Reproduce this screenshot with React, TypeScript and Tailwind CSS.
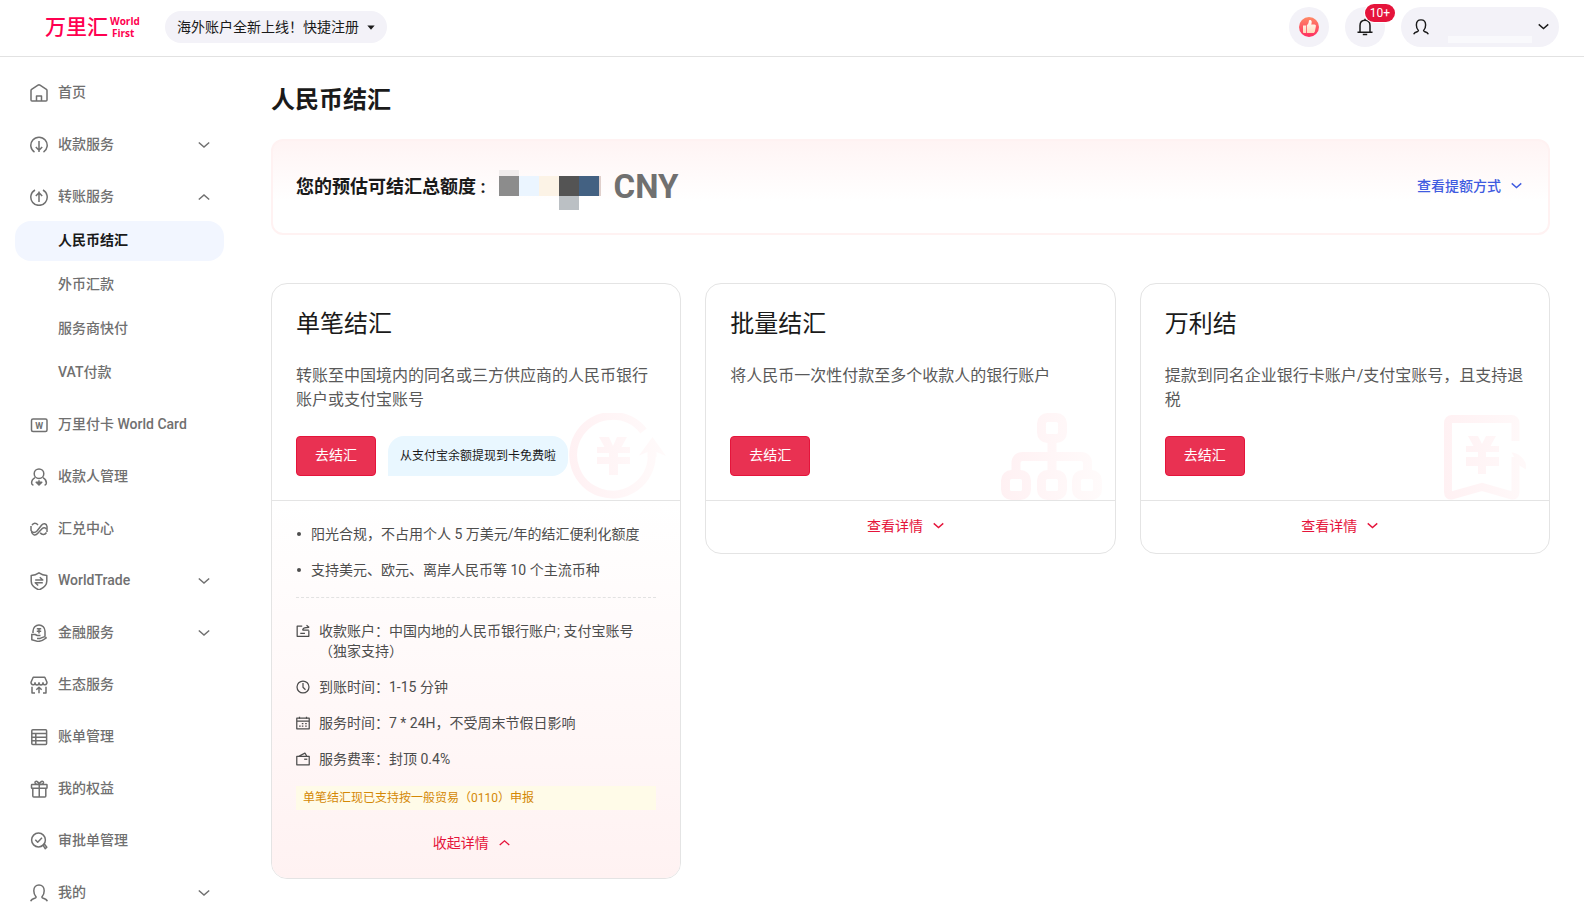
import { useState } from 'react';
import type { ReactNode } from 'react';

const ICONS: Record<string, ReactNode> = {
  home: (
    <>
      <path d="M1 6.6c0-.5.2-.9.6-1.2L8 1.2c.6-.4 1.400-.4 2 0l6.400 4.200c.4.3.6.7.6 1.200V16c0 .6-.4 1-1 1H2c-.6 0-1-.4-1-1z" />
      <path d="M6.5 17v-5h5v5" />
    </>
  ),
  collect: (
    <>
      <path d="M4.5 16.2A8.2 8.2 0 1 1 13.5 16.2" />
      <path d="M9 5v11M5.8 11 9 14.3 12.2 11" />
    </>
  ),
  transfer: (
    <>
      <path d="M5 2A8.2 8.2 0 1 0 13 2" />
      <path d="M9 14V3.5M5.8 8 9 4.7 12.2 8" />
    </>
  ),
  card: (
    <>
      <rect x="1.5" y="3" width="15.5" height="12.5" rx="1.5" />
      <text x="9.25" y="12.5" textAnchor="middle" fontSize="9" fontWeight="700" fontFamily="Roboto" fill="currentColor" stroke="none">W</text>
    </>
  ),
  payee: (
    <>
      <circle cx="9" cy="5.7" r="4.8" />
      <path d="M5 9.6C2.8 10.8 1.6 12.5 1.6 15c0 .9.4 1.800 1.800 2.300M13 9.600C15.2 10.8 16.4 12.5 16.4 15c0 .9-.4 1.800-1.800 2.300" />
      <path d="M9 12.200v4.800M6.200 14.300h5.600L9 17z" />
    </>
  ),
  exchange: (
    <>
      <path d="M2 5.300C3.200 2.800 6 2.600 8 5M1 6v4.200c1 2.800 4 2.800 6 .8L11.500 5.200c2-2.400 5-1.800 5.500 1.300v5.500" />
      <path d="M1.600 11.800c.8 3.600 4 4.200 6.200 1.500l4.200-4.600c1.600-1.500 3.300-1.200 4.500.3M10.200 12.800c1.800 2.500 4.600 2.300 6.300-.3" />
    </>
  ),
  trade: (
    <>
      <path d="M9 .8c2.3 1.6 4.9 2.5 7.800 2.600v5.800c0 3.800-3.400 6.800-7.800 8.800-4.400-2-7.800-5-7.800-8.800V3.400C4.100 3.300 6.700 2.400 9 .8z" />
      <path d="M5.200 8h7.600L9.800 5.200M12.800 10.800H5.200l3 2.700" />
    </>
  ),
  finance: (
    <>
      <path d="M3 9V7.200a6 6.200 0 0 1 12 0V12" />
      <path d="M6.800 4.700h4.400M6.800 7.200h4.400M9 4.700v4.800M1.800 9.800v6l6 1.600c3 0 6-1.500 8.400-3.400-.4-1.300-1.700-1.400-2.900-.9l-3.100 1.300H7M1.800 10.500h3.400l2 1h3.300" />
    </>
  ),
  store: (
    <>
      <path d="M3.200 1.200h11.600L17 6.300c0 3-4 3.500-4 .5 0 2.800-4 2.800-4 0 0 2.800-4 2.800-4 0 0 3-4 2.500-4-.5z" />
      <path d="M2 10.800V17h3M16 10.800V17h-3M9 17.200v-6M6.300 13.800 9 11.200l2.700 2.600" />
    </>
  ),
  bill: (
    <>
      <rect x="1.8" y="1.8" width="14.800" height="14.600" rx="1" />
      <path d="M1.8 5.500h14.800M1.800 9.200h14.800M1.800 12.800h14.800M5.800 5.500v11" />
    </>
  ),
  gift: (
    <>
      <rect x="1.5" y="4.5" width="15.5" height="3.8" rx=".5" />
      <path d="M2.8 8.3V16c0 .6.400 1 1 1h11c.6 0 1-.4 1-1V8.300M9.250 4.500V17M9.250 4.500C8.500 1.500 5.500.3 5 2.300c-.2 1.200.8 2.200 4.250 2.200C10 1.500 13 .3 13.500 2.300c.2 1.200-.8 2.200-4.250 2.200" />
    </>
  ),
  approve: (
    <>
      <circle cx="8.5" cy="8" r="6.9" />
      <path d="M5.3 7.8 7.7 10.2 12 5.8M13 13.2l1.300-1.200 2.500 3.200-1.600 1.500z" />
    </>
  ),
  user: (
    <path d="M.7 17.2c.6-2 2.600-2.600 4.600-3.200.8-.3 1-.9.5-1.500C4.600 11 3.800 9 3.800 6.700 3.800 3.300 6 1 9 1s5.200 2.300 5.200 5.700c0 2.300-.8 4.300-2 5.800-.5.6-.3 1.200.5 1.500 2 .6 4 1.200 4.600 3.200" />
  ),
  account: (
    <>
      <path d="M8 2.8H1.500v13h15V8.500M5.500 12h6" />
      <path d="M8.500 8c0-2.500 2-3.600 8-3.600M8.500 8h8M13.500 1.500 17 4.400" />
    </>
  ),
  clock: (
    <>
      <circle cx="9" cy="9" r="7.7" />
      <path d="M9 4v5.300l3.200 3.200" />
    </>
  ),
  calendar: (
    <>
      <path d="M1 2.800h16v13.700H1zM1 6.500h16" />
      <path d="M4.500 1v2.500M13.500 1v2.500M7.500 9.800h2M11.800 9.800h2M4 13h2M7.500 13h2M11.800 13h2" />
    </>
  ),
  wallet: (
    <>
      <path d="M1 5.500h16v11H1zM3.500 5.500 11.500 1.500 14 5.500" />
      <path d="M10.5 9.300h4" />
    </>
  ),
};

function Icon({ name, className, width = 1.5 }: { name: string; className: string; width?: number }) {
  return (
    <svg viewBox="0 0 18 18" className={className} fill="none" stroke="currentColor" strokeWidth={width} strokeLinejoin="round" aria-hidden="true">
      {ICONS[name]}
    </svg>
  );
}

function Chevron({ up, className }: { up?: boolean; className: string }) {
  return (
    <svg viewBox="0 0 12 8" className={className} fill="none" stroke="currentColor" strokeWidth="1.5" aria-hidden="true">
      <path d={up ? 'M.8 6.5 6 2l5.200 4.500' : 'M.8 1.500 6 6l5.200-4.500'} />
    </svg>
  );
}

type NavItem = { icon: string; label: string; open?: boolean; expandable?: boolean; children?: string[] };

const NAV: NavItem[] = [
  { icon: 'home', label: '首页' },
  { icon: 'collect', label: '收款服务', expandable: true },
  { icon: 'transfer', label: '转账服务', expandable: true, open: true, children: ['人民币结汇', '外币汇款', '服务商快付', 'VAT付款'] },
  { icon: 'card', label: '万里付卡 World Card' },
  { icon: 'payee', label: '收款人管理' },
  { icon: 'exchange', label: '汇兑中心' },
  { icon: 'trade', label: 'WorldTrade', expandable: true },
  { icon: 'finance', label: '金融服务', expandable: true },
  { icon: 'store', label: '生态服务' },
  { icon: 'bill', label: '账单管理' },
  { icon: 'gift', label: '我的权益' },
  { icon: 'approve', label: '审批单管理' },
  { icon: 'user', label: '我的', expandable: true },
];

const ROWS = [
  { icon: 'account', text: '收款账户：中国内地的人民币银行账户; 支付宝账号（独家支持）' },
  { icon: 'clock', text: '到账时间：1-15 分钟' },
  { icon: 'calendar', text: '服务时间：7 * 24H，不受周末节假日影响' },
  { icon: 'wallet', text: '服务费率：封顶 0.4%' },
];

function Header() {
  return (
    <header className="flex shrink-0 items-center border-b border-[#e2e2e2] pt-[7px] pr-[25px] pb-[9px] pl-[45px]">
      <a href="#" className="flex w-[98px] items-center gap-[2px] text-[#ff0050]" aria-label="万里汇 WorldFirst">
        <span className="text-[21px] leading-10 font-medium">万里汇</span>
        <span className="flex flex-col font-['Open_Sans'] text-[10px] leading-3 font-bold">
          <span>World</span>
          <span className="pl-[2px]">First</span>
        </span>
      </a>

      <button className="ml-[22px] flex h-8 items-center gap-2 rounded-full bg-[#f3f2f8] px-3 text-sm text-[#1a1a1a]">
        海外账户全新上线！快捷注册
        <svg viewBox="0 0 8 5" className="w-2" fill="currentColor" aria-hidden="true">
          <path d="M.3.500h7.400L4 4.700z" />
        </svg>
      </button>

      <div className="ml-auto flex items-center gap-4 text-[#1a1a1a]">
        <button aria-label="点赞" className="flex size-10 items-center justify-center rounded-full bg-[#f3f2f8]">
          <svg viewBox="0 0 20 20" className="size-5" aria-hidden="true">
            <defs>
              <linearGradient id="like" x1="0" y1="0" x2="0" y2="1">
                <stop offset="0" stopColor="#ff8a65" />
                <stop offset="1" stopColor="#ff2d61" />
              </linearGradient>
              <linearGradient id="hand" x1="0" y1="0" x2="0" y2="1">
                <stop offset="0" stopColor="#fff" />
                <stop offset="1" stopColor="#ffd9b8" />
              </linearGradient>
            </defs>
            <circle cx="10" cy="10" r="10" fill="url(#like)" />
            <path d="M4 8.500h3V16H5c-.6 0-1-.4-1-1zM7.800 8.300C9.500 7 9.700 5.500 9.900 3.700c.1-1 2.900-.9 2.800 1.300 0 .9-.2 1.800-.5 2.500h3.300c1 0 1.600.8 1.400 1.700l-1 5.300c-.2.9-.8 1.500-1.700 1.500H7.800z" fill="url(#hand)" />
          </svg>
        </button>
        <button aria-label="通知" className="relative flex size-10 items-center justify-center rounded-full bg-[#f3f2f8]">
          <svg viewBox="0 0 18 18" className="size-[18px]" fill="none" stroke="currentColor" strokeWidth="1.5" aria-hidden="true">
            <path d="M4 14V7.500C4 4 6 2.200 9 2.200s5 1.800 5 5.300V14M1.500 14.200h15M9 .8v1.400M6.800 16.500h4.400" />
          </svg>
          <span className="absolute -top-[3px] left-5 h-[18px] w-[30px] rounded-full bg-[#e5143b] text-center text-xs leading-[18px] text-white ring-1 ring-white">10+</span>
        </button>
        <button aria-label="账户" className="flex h-10 w-[158px] items-center justify-between rounded-full bg-[#f3f2f8] pr-[10px] pl-3">
          <Icon name="user" className="size-4" width={1.6} />
          <span className="mt-6 ml-3 h-[7px] w-[84px] bg-[#f9f9fc]" />
          <Chevron className="w-[11px]" />
        </button>
      </div>
    </header>
  );
}

function Sidebar() {
  return (
    <nav className="flex w-[239px] shrink-0 flex-col gap-3 overflow-y-auto px-[15px] py-4 text-sm font-medium text-[#707070] [scrollbar-width:none]">
      {NAV.map(item => (
        <div key={item.label} className="flex flex-col gap-1">
          <a href="#" className="flex h-10 items-center pr-[14px] pl-[15px]">
            <Icon name={item.icon} className="mr-[10px] size-[18px]" />
            <span className="pb-[2px]">{item.label}</span>
            {item.expandable && <Chevron up={item.open} className="ml-auto w-3" />}
          </a>
          {item.children?.map((child, i) => (
            <a
              key={child}
              href="#"
              className={i === 0 ? 'flex h-10 items-center rounded-2xl bg-[#f2f6ff] pb-[2px] pl-[43px] font-bold text-[#1a1a1a]' : 'flex h-10 items-center pb-[2px] pl-[43px]'}
            >
              {child}
            </a>
          ))}
        </div>
      ))}
    </nav>
  );
}

function Fade({ id }: { id: string }) {
  return (
    <defs>
      <linearGradient id={id} gradientUnits="userSpaceOnUse" x1="0" y1="0" x2="104" y2="0">
        <stop offset="0" stopColor="#fff1f3" />
        <stop offset="1" stopColor="#fffbfb" />
      </linearGradient>
    </defs>
  );
}

function SingleArt() {
  return (
    <svg viewBox="0 0 98 87" className="absolute right-[13px] bottom-0 w-[98px]" aria-hidden="true">
      <Fade id="fade-single" />
      <path d="M74.500 18A39.300 39.300 0 1 0 82.800 43" fill="none" stroke="url(#fade-single)" strokeWidth="8" />
      <path d="M70 42.500 83.500 24 97 43l-9.500-4v5h-9v-5z" fill="url(#fade-single)" />
      <path d="M30 24h10l4 9 4-9h10l-5.500 10H61v6H49v4h12v7H49v11h-9V51H28v-7h12v-4H28v-6h7.500z" fill="url(#fade-single)" />
    </svg>
  );
}

function BatchArt() {
  return (
    <svg viewBox="0 0 102 87" className="absolute right-3 bottom-0 w-[102px]" aria-hidden="true">
      <Fade id="fade-batch" />
      <g fill="none" stroke="url(#fade-batch)" strokeWidth="9">
        <rect x="40.5" y="4.5" width="21" height="21" rx="6" />
        <rect x="4.5" y="61.5" width="21" height="21" rx="6" />
        <rect x="40.5" y="61.5" width="21" height="21" rx="6" />
        <rect x="75.5" y="61.5" width="21" height="21" rx="6" />
        <path d="M51 30V57M15 57v-7c0-4 2.500-6.500 6.500-6.500H80c4 0 6.500 2.500 6.500 6.500v7" />
      </g>
    </svg>
  );
}

function InvoiceArt() {
  return (
    <svg viewBox="0 0 82 85" className="absolute right-[23px] bottom-0 w-[82px]" aria-hidden="true">
      <Fade id="fade-invoice" />
      <path d="M71.500 26V8c0-2.500-1.500-4-4-4H8C5.500 4 4 5.500 4 8v69c0 3 1.500 4 4 3.300L38 72l29.500 8.300c2.500.7 4-.3 4-3.300V42" fill="none" stroke="url(#fade-invoice)" strokeWidth="8" />
      <path d="M67.500 37.500c6 0 12.500 5 14.500 12v5l-6.500-4z" fill="url(#fade-invoice)" />
      <path d="M24 21h10l4 8 4-8h10l-5.500 10H55v6H42v5h13v9H42v8h-8v-8H22v-9h12v-5H22v-6h7.500z" fill="url(#fade-invoice)" />
    </svg>
  );
}

type CardProps = { title: string; desc: string; art: ReactNode; tip?: string; defaultOpen?: boolean };

function SettleCard({ title, desc, art, tip, defaultOpen = false }: CardProps) {
  const [open, setOpen] = useState(defaultOpen);

  return (
    <section className="overflow-hidden rounded-2xl border border-[#e4e4e4]">
      <div className="relative flex h-[217px] flex-col border-b border-[#e4e4e4] p-6">
        {art}
        <h2 className="text-2xl leading-8 text-[#1a1a1a]">{title}</h2>
        <p className="mt-6 text-base leading-6 text-[#595959]">{desc}</p>
        <div className="relative mt-auto flex gap-3">
          <button className="h-10 w-20 rounded-sm border border-[#e5143b] bg-[#e93152] pb-[2px] text-sm text-white">去结汇</button>
          {tip && <span className="flex h-10 items-center rounded-2xl rounded-bl-none bg-[#e9f7ff] px-3 text-xs text-[#1a1a1a]">{tip}</span>}
        </div>
      </div>

      <div className={open ? 'bg-linear-to-b from-white to-[#fff2f2] px-6 pt-[23px] pb-[25px] text-sm text-[#4d4d4d]' : 'px-6 pt-[15px] pb-[17px] text-sm'}>
        {open && (
          <>
            <ul className="flex flex-col gap-4 border-b border-dashed border-[#e2e2e2] pb-[17px]">
              {['阳光合规，不占用个人 5 万美元/年的结汇便利化额度', '支持美元、欧元、离岸人民币等 10 个主流币种'].map(t => (
                <li key={t} className="flex items-center gap-[10px] pl-[1px]">
                  <span className="size-1 shrink-0 rounded-full bg-[#4d4d4d]" />
                  {t}
                </li>
              ))}
            </ul>
            <ul className="mt-[23px] flex flex-col gap-4">
              {ROWS.map(r => (
                <li key={r.icon} className="flex gap-[9px]">
                  <Icon name={r.icon} className="mt-[3px] size-[14px] shrink-0" width={1.6} />
                  <span>{r.text}</span>
                </li>
              ))}
            </ul>
            <p className="mt-[17px] mb-[23px] bg-[#fffbe8] px-[7px] text-xs leading-6 text-[#d48806]">单笔结汇现已支持按一般贸易（0110）申报</p>
          </>
        )}
        <button
          className="flex h-5 w-full items-center justify-center gap-[10px] pr-[10px] text-[#e5143b]"
          aria-expanded={open}
          onClick={() => setOpen(!open)}
        >
          {open ? '收起详情' : '查看详情'}
          <Chevron up={open} className="w-[11px]" />
        </button>
      </div>
    </section>
  );
}

export default function App() {
  return (
    <div className="flex h-screen flex-col overflow-hidden bg-white font-[Roboto,'Noto_Sans_CJK_SC',sans-serif]">
      <Header />
      <div className="flex min-h-0 flex-1">
        <Sidebar />
        <main className="min-w-0 flex-1 overflow-y-auto pt-[27px] pr-[34px] pb-6 pl-8 [scrollbar-width:none]">
          <h1 className="text-2xl leading-8 font-bold text-[#1a1a1a]">人民币结汇</h1>

          <div className="mt-[23px] flex h-24 items-center rounded-xl border-2 border-[#fff2f2] bg-linear-to-b from-[#fff4f4] to-white to-65% px-[23px]">
            <span className="text-lg font-bold text-[#1a1a1a]">您的预估可结汇总额度 :</span>
            {/* masked amount */}
            <svg viewBox="0 0 102 40" className="mt-[6px] ml-[13px] w-[102px]" shapeRendering="crispEdges" aria-hidden="true">
              <path fill="#f0ecec" d="M0 0h20v6H0z" />
              <path fill="#8c8c8c" d="M0 6h20v20H0z" />
              <path fill="#ebf5ff" d="M20 6h20v20H20z" />
              <path fill="#fcf3e6" d="M40 6h20v20H40z" />
              <path fill="#545454" d="M60 6h20v20H60z" />
              <path fill="#436182" d="M80 6h20v20H80z" />
              <path fill="#e0d0cc" d="M100 6h2v20h-2z" />
              <path fill="#bbc0c4" d="M60 26h20v14H60z" />
            </svg>
            <span className="ml-[13px] text-[33px] leading-10 font-bold text-[#707070]">CNY</span>
            <button className="ml-auto flex items-center gap-[10px] pb-[3px] text-sm font-medium text-[#3f5be0]">
              查看提额方式
              <Chevron className="mr-[3px] w-[11px]" />
            </button>
          </div>

          <div className="mt-12 grid grid-cols-3 items-start gap-6">
            <SettleCard
              title="单笔结汇"
              desc="转账至中国境内的同名或三方供应商的人民币银行账户或支付宝账号"
              tip="从支付宝余额提现到卡免费啦"
              art={<SingleArt />}
              defaultOpen
            />
            <SettleCard title="批量结汇" desc="将人民币一次性付款至多个收款人的银行账户" art={<BatchArt />} />
            <SettleCard title="万利结" desc="提款到同名企业银行卡账户/支付宝账号，且支持退税" art={<InvoiceArt />} />
          </div>
        </main>
      </div>
    </div>
  );
}
